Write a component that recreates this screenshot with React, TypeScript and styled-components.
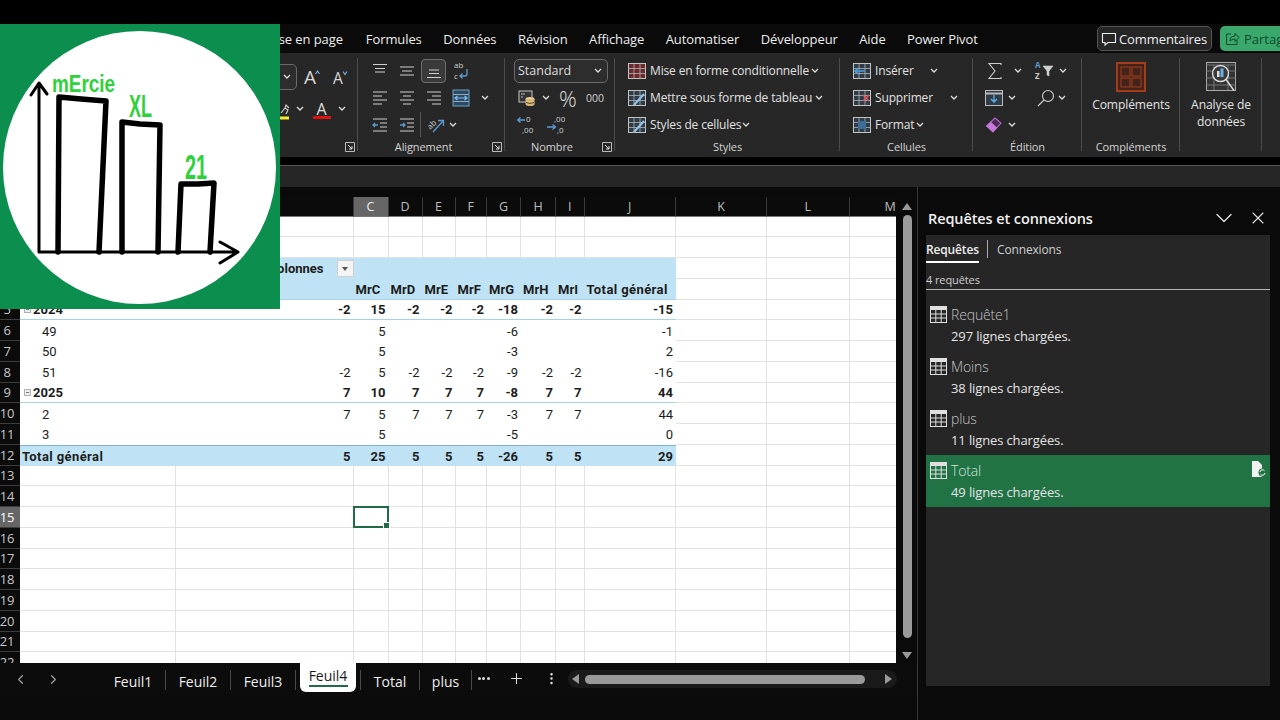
import React from 'react';
import styled, { createGlobalStyle } from 'styled-components';
import { ChevronDown, ChevronLeft, ChevronRight, X, Plus, EllipsisVertical } from 'lucide-react';

const Global = createGlobalStyle`
  html, body { margin: 0; padding: 0; background: #000; overflow: hidden; }
  * { box-sizing: border-box; }
`;
const UI = `"Open Sans", "Noto Sans", sans-serif`;
const CELL = `Roboto, "Liberation Sans", sans-serif`;

const Page = styled.div`
  position: relative; width: 1280px; height: 720px; background: #000; color: #e6e6e6;
  font-family: ${UI}; overflow: hidden; display: flex; flex-direction: column;
`;
const TopBlack = styled.div`height: 24px; flex: none;`;
const MenuBar = styled.div`
  height: 29px; flex: none; background: #0a0a0a; display: flex; align-items: center; padding-left: 264px; position: relative;
`;
const MenuItem = styled.span`font-size: 13px; color: #ededed; margin-right: 21.5px; white-space: nowrap; letter-spacing: -.1px; &:first-child { margin-right: 23px; }`;
const MenuRight = styled.div`margin-left: auto; display: flex; align-items: center; gap: 8px;`;
const CommentBtn = styled.div`
  width: 115px; height: 25px; border: 1px solid #555; border-radius: 5px; background: #262626; display: flex; align-items: center;
  gap: 2px; padding-left: 3px; font-size: 13px; color: #eee; letter-spacing: -.1px; white-space: nowrap;
  svg { flex: none; }
`;
const ShareBtn = styled.div`
  width: 60px; height: 25px; border-radius: 5px 0 0 5px; background: #3aa76d; display: flex; align-items: center; gap: 4px; padding-left: 5px;
  font-size: 13px; color: #0f4a2b; overflow: hidden; white-space: nowrap;
  svg { flex: none; }
`;
const Ribbon = styled.div`height: 104px; flex: none; background: #272727; display: flex; padding-top: 4px;`;
const Group = styled.div<{ $w: number }>`width: ${p => p.$w}px; flex: none; display: flex; flex-direction: column;`;
const Body = styled.div`height: 81px; flex: none;`;
const FontBody = styled(Body)`padding-top: 6px; display: flex; flex-direction: column; gap: 5px;`;
const Foot = styled.div`height: 17px; display: flex; align-items: center;`;
const FootLabel = styled.span`flex: 1; text-align: center; font-size: 11px; color: #d4d4d4; white-space: nowrap; letter-spacing: -.1px;`;
const Launch = styled.span`width: 16px; flex: none; display: flex; justify-content: center;`;
const Sep = styled.div`width: 1px; flex: none; background: #4b4b4b; margin: 1px 0 6px; margin-left: -1px;`;
const IconRow = styled.div<{ $pad?: number }>`height: 27px; display: flex; align-items: center; padding-left: ${p => p.$pad || 0}px;`;
const EndRow = styled.div<{ $pad: number }>`height: 27px; display: flex; align-items: center; justify-content: flex-end; padding-right: ${p => p.$pad}px;`;
const Slot = styled.span<{ $w?: number }>`width: ${p => p.$w || 27}px; height: 27px; flex: none; display: flex; align-items: center; justify-content: center;`;
const Picked = styled.span`width: 25px; height: 24px; border: 1px solid #6e6e6e; background: #3a3a3a; border-radius: 4px; display: flex; align-items: center; justify-content: center; margin: 0 1px;`;
const Divided = styled.span`width: 27px; height: 25px; border-left: 1px solid #555; display: flex; align-items: center; justify-content: center; padding-left: 2px;`;
const SelectBox = styled.div<{ $w: number; $h?: number }>`
  width: ${p => p.$w}px; height: ${p => p.$h || 24}px; border: 1px solid #6a6a6a; border-radius: 5px; background: #2d2d2d; display: flex; align-items: center;
  justify-content: space-between; padding: 0 5px 0 3px; font-size: 12.5px; color: #ddd; flex: none;
`;
const NumSelectRow = styled.div`height: 27px; display: flex; align-items: center; padding-left: 9px;`;
const TextBtn = styled.span`font-size: 12px; color: #e2e2e2; margin-left: 4px; white-space: nowrap; letter-spacing: -.15px;`;
const BigBody = styled.div`height: 81px; display: flex; flex-direction: column; align-items: center; padding-top: 5px; flex: none;`;
const BigText = styled.div`font-size: 12.1px; line-height: 16.5px; color: #e2e2e2; text-align: center; margin-top: 5px; white-space: nowrap; letter-spacing: -.1px;`;
const Thousands = styled.span`font-size: 10.5px; color: #cfcfcf;`;
const Percent = styled.span`font-size: 22px; color: #ddd; font-weight: 300; line-height: 24px;`;

const FormulaGap = styled.div`height: 8px; flex: none;`;
const FormulaBar = styled.div`height: 22px; flex: none; background: #262626; border-top: 1px solid #555;`;
const Main = styled.div`flex: 1; display: flex; min-height: 0; background: #0a0a0a;`;
const SheetCol = styled.div`width: 917px; flex: none; display: flex; flex-direction: column;`;
const SheetTop = styled.div`height: 476px; display: flex; padding-top: 10px;`;
const SheetArea = styled.div`width: 896px; flex: none; overflow: hidden; display: flex; flex-direction: column; background: #fff;`;

const COLS = '20px 156px 177.5px 35px 34px 33px 31.5px 34px 35px 28.5px 91.5px 91px 82.5px 82px';
const Line = styled.div<{ $h?: number }>`
  display: grid; grid-template-columns: ${COLS}; height: ${p => p.$h || 20.75}px; flex: none;
`;
const ColHead = styled.div<{ $on?: boolean }>`
  background: ${p => p.$on ? '#666' : '#0b0b0b'}; color: ${p => p.$on ? '#eee' : '#bdbdbd'}; font-family: ${UI}; font-size: 12.5px;
  display: flex; align-items: center; justify-content: center; border-right: 1px solid #3a3a3a; border-bottom: 1px solid #777;
`;
const RowHead = styled.div<{ $on?: boolean }>`
  background: ${p => p.$on ? '#666' : '#0b0b0b'}; color: ${p => p.$on ? '#fff' : '#c8c8c8'}; font-family: ${UI}; font-size: 13px;
  display: flex; align-items: center; justify-content: center; padding-right: 6px; border-bottom: 1px solid #3d3d3d; letter-spacing: -.2px; overflow: hidden;
`;
const Cell = styled.div<{ $grid?: boolean; $fill?: boolean; $bold?: boolean; $right?: boolean; $rule?: string; $top?: string; $indent?: number }>`
  position: relative; font-family: ${CELL}; font-size: 13px; color: #1c1c1c; display: flex; align-items: center; white-space: nowrap;
  font-weight: ${p => p.$bold ? 700 : 400};
  justify-content: ${p => p.$right ? 'flex-end' : 'flex-start'};
  padding: 1px 3px 0 ${p => p.$indent || 2}px;
  background: ${p => p.$fill ? '#bfe3f5' : '#fff'};
  border-right: ${p => p.$grid ? '1px solid #e2e2e2' : 'none'};
  border-bottom: ${p => p.$rule ? `1px solid ${p.$rule}` : p.$grid ? '1px solid #e2e2e2' : 'none'};
  border-top: ${p => p.$top ? `1px solid ${p.$top}` : 'none'};
`;
const ColLabel = styled(Cell)`justify-content: flex-end; padding-right: 30px;`;
const Wide = styled.span`letter-spacing: .4px;`;
const FilterBtn = styled.span`
  position: absolute; right: 0; top: 2px; width: 17px; height: 17px; background: #f4f4f4; border: 1px solid #cfcfcf; display: flex; align-items: center; justify-content: center;
`;
const Tri = styled.span`width: 0; height: 0; border-left: 3.5px solid transparent; border-right: 3.5px solid transparent; border-top: 4px solid #555;`;
const Collapse = styled.span`
  width: 7px; height: 7px; border: 1px solid #b0b0b0; background: #eee; margin: 0 2px 0 2px; position: relative; flex: none;
  &::after { content: ''; position: absolute; left: 1px; right: 1px; top: 2px; height: 1px; background: #777; }
`;
const Selected = styled.div`
  position: absolute; inset: -1px -1px -1px -1px; border: 2px solid #1f6b45; z-index: 2;
  &::after { content: ''; position: absolute; right: -3px; bottom: -3px; width: 5px; height: 5px; background: #1f6b45; border: 1px solid #fff; }
`;
const VScroll = styled.div`width: 21px; flex: none; display: flex; flex-direction: column; align-items: center; padding: 6px 0 0 1px; position: relative;`;
const VArrow = styled.span<{ $up?: boolean }>`
  width: 0; height: 0; border-left: 5px solid transparent; border-right: 5px solid transparent; flex: none;
  ${p => p.$up ? 'border-bottom: 7px solid #999;' : 'border-top: 7px solid #999;'}
`;
const VThumb = styled.div`width: 9px; height: 423px; background: #9a9a9a; border-radius: 5px; margin: 5px 0 14px; flex: none;`;

const TabsBar = styled.div`height: 33px; flex: none; display: flex; align-items: flex-start; background: #0c0c0c; width: 917px;`;
const NavSlot = styled.span`width: 33px; height: 33px; display: flex; align-items: center; justify-content: center; color: #9c9c9c; flex: none;`;
const NavPad = styled.span`width: 3.5px; flex: none;`;
const NavGap = styled.span`width: 31px; flex: none;`;
const SheetTab = styled.div<{ $w: number }>`
  width: ${p => p.$w}px; height: 33px; flex: none; display: flex; align-items: center; justify-content: center; padding-top: 3px;
  font-size: 14px; color: #eee; position: relative; white-space: nowrap;
  &::after { content: ''; position: absolute; right: 0; top: 7px; height: 20px; width: 1px; background: #4a4a4a; }
`;
const ActiveWrap = styled.div<{ $w: number }>`
  width: ${p => p.$w}px; height: 33px; flex: none; position: relative; display: flex; justify-content: center;
  &::after { content: ''; position: absolute; right: 0; top: 7px; height: 20px; width: 1px; background: #4a4a4a; }
`;
const ActiveTab = styled.div`
  width: 56px; height: 29px; background: #fff; border-radius: 0 0 6px 6px; color: #1b1b1b; font-size: 14px; display: flex; flex-direction: column; align-items: center; padding-top: 3px; line-height: 19px;
  &::after { content: ''; width: 39px; height: 2px; background: #1f6b45; margin-top: 0; }
`;
const BarBtn = styled.span<{ $w: number }>`width: ${p => p.$w}px; height: 33px; flex: none; display: flex; align-items: center; justify-content: center; color: #ddd; padding-bottom: 2px;`;
const Dots = styled.span`display: flex; gap: 1.5px; span { width: 3px; height: 3px; border-radius: 50%; background: #ddd; }`;
const HScroll = styled.div`width: 329px; height: 18px; margin: 7px 0 0 3.5px; border-radius: 9px; background: #1a1a1a; display: flex; align-items: center; padding: 0 5px 0 4px; flex: none;`;
const HThumb = styled.div`width: 280px; height: 9px; border-radius: 5px; background: #9a9a9a; margin-left: 6px;`;
const HArrow = styled.span<{ $left?: boolean }>`
  width: 0; height: 0; border-top: 5px solid transparent; border-bottom: 5px solid transparent;
  ${p => p.$left ? 'border-right: 7px solid #999;' : 'border-left: 7px solid #999; margin-left: auto;'}
`;

const Panel = styled.div`width: 363px; flex: none; border-left: 1px solid #3a3a3a; padding: 0 10px 0 8px; display: flex; flex-direction: column;`;
const PanelHead = styled.div`height: 48px; flex: none; display: flex; align-items: center; padding: 14px 0 0 2px; margin-right: -5px;`;
const PanelTitle = styled.div`font-size: 14.5px; font-weight: 600; color: #f0f0f0; flex: 1; letter-spacing: -.1px; white-space: nowrap;`;
const PanelBtn = styled.span`width: 34px; display: flex; justify-content: center; color: #e6e6e6;`;
const Pane = styled.div`height: 451px; flex: none; background: #262626; display: flex; flex-direction: column;`;
const PaneTabs = styled.div`height: 28px; flex: none; display: flex; align-items: flex-start;`;
const PaneTabOn = styled.div`
  width: 53px; height: 28px; border-bottom: 2px solid #fff; font-size: 12px; font-weight: 600; color: #eee; padding-top: 6px; white-space: nowrap; letter-spacing: -.15px;
`;
const PaneDiv = styled.div`width: 1px; height: 18px; background: #aaa; margin: 5px 9px 0 8px;`;
const PaneTab = styled.div`font-size: 12px; color: #cfcfcf; padding-top: 6px; white-space: nowrap; letter-spacing: -.15px;`;
const Count = styled.div`height: 27px; flex: none; border-bottom: 1px solid #b5b5b5; font-size: 11px; color: #cfcfcf; padding-top: 9px; letter-spacing: -.1px; margin-bottom: 9px;`;
const Query = styled.div<{ $on?: boolean }>`
  height: 52px; flex: none; position: relative; padding: 4px 0 0 4px; background: ${p => p.$on ? '#217346' : 'transparent'};
`;
const QueryTop = styled.div`display: flex; align-items: center; gap: 4px; height: 22px;`;
const QueryName = styled.span<{ $on?: boolean }>`font-size: 14px; font-weight: 300; color: ${p => p.$on ? '#cfe8d8' : '#c4c4c4'}; letter-spacing: -.15px;`;
const QuerySub = styled.div`font-size: 13px; color: #e4e4e4; padding-left: 21px; line-height: 23px; letter-spacing: -.12px;`;
const DocMark = styled.span`position: absolute; right: 3px; top: 6px; display: flex;`;
const LogoFrame = styled.div`position: absolute; left: 0; top: 24px; width: 280px; height: 285px; background: #0b8e4e; z-index: 5;`;

/* ---------- icons ---------- */
const Chev = ({ ml = 0 }: { ml?: number }) => (
  <svg width="8" height="5" viewBox="0 0 8 5" style={{ marginLeft: ml, flex: 'none' }}><path d="M1 1l3 3 3-3" fill="none" stroke="#ddd" strokeWidth="1.3" /></svg>
);
const Launcher = () => (
  <svg width="10" height="10" viewBox="0 0 10 10"><path d="M.5 9.5v-9h9v9z" fill="none" stroke="#bbb" /><path d="M3 3l4 4M7 4v3H4" fill="none" stroke="#ddd" /></svg>
);
const Rows = ({ d }: { d: string }) => (
  <svg width="18" height="18" viewBox="0 0 18 18"><path d={d} fill="none" stroke="#d0d0d0" strokeWidth="1.2" /></svg>
);
const I = {
  top: 'M2 2.5h14M4 6.5h10M4 10h10', mid: 'M2 5h14M4 9h10M2 13h14', bot: 'M4 8h10M4 11.5h10M2 15.5h14',
  left: 'M2 3h14M2 7h9M2 11h14M2 15h9', center: 'M2 3h14M5 7h8M2 11h14M5 15h8', right: 'M2 3h14M7 7h9M2 11h14M7 15h9',
};
const Wrap = () => (
  <svg width="20" height="24" viewBox="0 0 20 24"><text x="3" y="9" fontSize="8" fill="#ccc" fontFamily="Open Sans">ab</text><text x="3" y="19.9" fontSize="8" fill="#ccc" fontFamily="Open Sans">c</text><path d="M16 10v5q0 2-2 2H9m2.500-2.500L9 17l2.500 2.500" fill="none" stroke="#5b9bd5" strokeWidth="1.3" /></svg>
);
const Merge = () => (
  <svg width="18" height="18" viewBox="0 0 18 18"><rect x="1" y="1" width="16" height="16" fill="#2c4a63" stroke="#6f9fc4" /><path d="M1 5.500h16M1 12.500h16" stroke="#8fa9bd" /><path d="M3 9h12M5.500 7L3 9l2.500 2M12.500 7L15 9l-2.500 2" fill="none" stroke="#7fc0f0" strokeWidth="1.2" /></svg>
);
const Indent = ({ flip }: { flip?: boolean }) => (
  <svg width="18" height="16" viewBox="0 0 18 16"><path d="M2 2h14M9 6h7M9 10h7M2 14h14" stroke="#cfcfcf" strokeWidth="1.2" /><path d={flip ? 'M2 8h5M5 6l2 2-2 2' : 'M2 8h5M4 6L2 8l2 2'} fill="none" stroke="#5b9bd5" strokeWidth="1.3" /></svg>
);
const Orient = () => (
  <svg width="22" height="24" viewBox="0 0 22 24"><text x="3" y="15" fontSize="8" fill="#ccc" fontFamily="Open Sans" transform="rotate(-45 7 12)">ab</text><path d="M9 19L19 8M14 7.500H19.500V13" fill="none" stroke="#5b9bd5" strokeWidth="1.3" /></svg>
);
const AUp = ({ up }: { up?: boolean }) => (
  <svg width="22" height="28" viewBox="0 0 22 28"><text x={up ? 3 : 5} y="21" fontSize={up ? 19 : 15.5} fill="#d8d8d8" fontFamily="Open Sans">A</text><path d={up ? 'M14.500 11l2-3 2 3' : 'M15 8.500l2 3 2-3'} fill="none" stroke="#7db4dc" strokeWidth="1.1" /></svg>
);
const Highlight = () => (
  <svg width="18" height="24" viewBox="0 0 18 24"><path d="M6 16l4-5 3 2-2 4M10 11l1-3 3 3" fill="none" stroke="#ccc" strokeWidth="1.2" /><rect x="0" y="19.500" width="14" height="3" fill="#f3e92f" /></svg>
);
const FontA = () => (
  <svg width="18" height="26" viewBox="0 0 18 26"><text x="3.500" y="19" fontSize="16" fill="#dedede" fontFamily="Open Sans">A</text><rect x="0" y="20" width="18" height="3" fill="#e01313" /></svg>
);
const Acct = () => (
  <svg width="18" height="18" viewBox="0 0 18 18"><rect x="1" y="2" width="13" height="11" fill="#333" stroke="#c9c9c9" /><path d="M3 5h4M3 8h2" stroke="#bbb" /><ellipse cx="12" cy="10" rx="4.500" ry="2" fill="#e6cf9a" /><path d="M7.500 10v5q0 2 4.500 2t4.500-2v-5" fill="#d8b878" /><path d="M8 13.500q4 2 8 0" stroke="#5a4a28" fill="none" /></svg>
);
const Dec = ({ more }: { more?: boolean }) => (
  <svg width="20" height="24" viewBox="0 0 20 24">
    <text x={more ? 8 : 9} y="9" fontSize="8" fill="#d0d0d0" fontFamily="Open Sans">{more ? ',00' : '0'}</text>
    <text x={more ? 11 : 5} y="19.900" fontSize="8" fill="#d0d0d0" fontFamily="Open Sans">{more ? ',0' : ',00'}</text>
    <path d={more ? 'M1 14h8M6.500 11.500L9.500 14l-3 2.500' : 'M8 7H1M3.500 4.500L.8 7l2.700 2.500'} fill="none" stroke="#5b9bd5" strokeWidth="1.3" />
  </svg>
);
const Table = ({ tint, mark }: { tint?: string; mark?: 'pen' | 'arrow' | 'x' | 'size' }) => (
  <svg width="18" height="18" viewBox="0 0 18 18">
    <rect x=".5" y="1.500" width="17" height="15" fill={tint || '#2f3c48'} stroke="#c4c4c4" />
    <path d="M.5 6.500h17M.5 11.500h17M6 1.500v15M12 1.500v15" stroke="#b5b5b5" strokeWidth=".8" />
    {mark === 'pen' && <path d="M6 16L16 5" stroke="#8fc3ea" strokeWidth="2.200" />}
    {mark === 'arrow' && <path d="M12 9H2M5 6L2 9l3 3" fill="none" stroke="#4aa3e6" strokeWidth="1.500" />}
    {mark === 'x' && <path d="M10 6l6 6M16 6l-6 6" stroke="#e0555a" strokeWidth="1.600" />}
    {mark === 'size' && <rect x="5" y="5" width="8" height="8" fill="#3d6e96" />}
  </svg>
);
const Sigma = () => (<svg width="18" height="18" viewBox="0 0 18 18"><path d="M15 3V1.500H3l6 7.500-6 7.500h12V15" fill="none" stroke="#cfcfcf" strokeWidth="1.100" /></svg>);
const FillDown = () => (<svg width="18" height="16" viewBox="0 0 18 16"><rect x=".5" y=".5" width="17" height="15" fill="#2f3c48" stroke="#bbb" /><path d="M.5 3.500h17" stroke="#bbb" strokeWidth="2" /><path d="M9 5v7M6 9l3 3 3-3" fill="none" stroke="#5db0ee" strokeWidth="1.300" /></svg>);
const Eraser = () => (<svg width="18" height="18" viewBox="0 0 18 18"><path d="M1.500 10L10 2l6 5-8 9z" fill="#4a2a55" stroke="#b56ac9" strokeWidth="1.100" /><path d="M1.500 10l6.500 6 4-4.500L6 6z" fill="#c67bdc" /></svg>);
const Sort = () => (
  <svg width="20" height="24" viewBox="0 0 20 24"><text x="0" y="9" fontSize="8" fontWeight="700" fill="#5b9bd5" fontFamily="Open Sans">A</text><text x="0" y="19.900" fontSize="8" fontWeight="700" fill="#cfcfcf" fontFamily="Open Sans">Z</text><path d="M8 7h10l-4 5v5l-2-1v-4z" fill="#cfcfcf" stroke="#cfcfcf" strokeWidth=".6" /></svg>
);
const Search = () => (<svg width="18" height="18" viewBox="0 0 18 18"><circle cx="11" cy="7" r="5.500" fill="none" stroke="#d0d0d0" strokeWidth="1.100" /><path d="M7 11l-6 6" stroke="#d0d0d0" strokeWidth="1.100" /></svg>);
const AddIns = () => (
  <svg width="30" height="30" viewBox="0 0 30 30"><rect x="1" y="1" width="28" height="28" fill="#43241a" stroke="#a53c1c" strokeWidth="2" /><rect x="5" y="5" width="9" height="9" fill="none" stroke="#a53c1c" /><rect x="16" y="5" width="9" height="9" fill="none" stroke="#a53c1c" /><rect x="5" y="16" width="9" height="9" fill="none" stroke="#a53c1c" /><rect x="16" y="16" width="9" height="9" fill="none" stroke="#a53c1c" /></svg>
);
const Analyze = () => (
  <svg width="30" height="30" viewBox="0 0 30 30">
    <rect x=".5" y=".5" width="29" height="28" fill="#333" stroke="#aaa" /><path d="M.5 3h29M.5 9h29M.5 16h29M.5 23h29M8 3v25M22 3v25" stroke="#777" />
    <circle cx="14.500" cy="11.500" r="8" fill="#3a3a3a" stroke="#ddd" strokeWidth="1.400" />
    <rect x="11" y="9" width="2.500" height="6" fill="#ddd" /><rect x="14.500" y="6.500" width="3" height="8.500" fill="#62b0ea" />
    <path d="M20 17.500l8 11" stroke="#ddd" strokeWidth="1.400" />
  </svg>
);
const QIcon = () => (
  <svg width="17" height="17" viewBox="0 0 17 17"><rect x=".5" y=".5" width="16" height="16" fill="none" stroke="#e0e0e0" /><rect x=".5" y=".5" width="16" height="3.500" fill="#e0e0e0" /><path d="M.5 8h16M.5 12h16M5.800 4v12.500M11.200 4v12.500" stroke="#e0e0e0" /></svg>
);
const DocIcon = () => (
  <svg width="16" height="16" viewBox="0 0 16 16"><path d="M1 0h6l4 4v12H1z" fill="#f2f2f2" /><circle cx="11.500" cy="11.500" r="4" fill="#217346" /><path d="M9 11a2.500 2.500 0 0 1 4.500-1.200M14 12a2.500 2.500 0 0 1-4.500 1.200" fill="none" stroke="#fff" strokeWidth="1" /></svg>
);
const Bubble = () => (<svg width="16" height="16" viewBox="0 0 16 16"><path d="M1.500 2.500h13v9H7l-3 2.500v-2.500H1.500z" fill="none" stroke="#eee" strokeWidth="1.100" /></svg>);
const ShareIco = () => (<svg width="15" height="15" viewBox="0 0 15 15"><path d="M6 3H1.500v10.500h10.500V9" fill="none" stroke="#0f4a2b" /><path d="M5 10q0-5 5-5V2.500l4 4-4 4V8q-3 0-5 2z" fill="none" stroke="#0f4a2b" /></svg>);

const Logo = () => (
  <LogoFrame>
    <svg width="280" height="285" viewBox="0 0 280 285">
      <circle cx="139.500" cy="143.500" r="136.500" fill="#fff" />
      <g fill="none" stroke="#000" strokeLinecap="round" strokeLinejoin="round">
        <path d="M39 60V228H238M31 71l8-12 8 11M220 218l18 10-18 11" strokeWidth="3" />
        <path d="M58 228L59 73 81 75 106 77 99 228M122 228V98L140 100 160 101 158 228M178 228L181 160 198 160 214 159 210 228" strokeWidth="5.500" />
      </g>
      <g fill="#2fd13a" fontWeight="700" fontFamily="'Liberation Sans Narrow','Liberation Sans',sans-serif">
        <text x="52" y="68" fontSize="24" textLength="63" lengthAdjust="spacingAndGlyphs">mErcie</text>
        <text x="129" y="93" fontSize="32" textLength="23" lengthAdjust="spacingAndGlyphs">XL</text>
        <text x="185" y="155" fontSize="35" textLength="22" lengthAdjust="spacingAndGlyphs">21</text>
      </g>
    </svg>
  </LogoFrame>
);

/* ---------- data ---------- */
const LETTERS = ['A', 'B', 'C', 'D', 'E', 'F', 'G', 'H', 'I', 'J', 'K', 'L', 'M'];
type P = { label: string; vals: (number | '')[]; kind: 'year' | 'week' | 'total' };
const PIVOT: Record<number, P> = {
  5: { label: '2024', kind: 'year', vals: [-2, 15, -2, -2, -2, -18, -2, -2, -15] },
  6: { label: '49', kind: 'week', vals: ['', 5, '', '', '', -6, '', '', -1] },
  7: { label: '50', kind: 'week', vals: ['', 5, '', '', '', -3, '', '', 2] },
  8: { label: '51', kind: 'week', vals: [-2, 5, -2, -2, -2, -9, -2, -2, -16] },
  9: { label: '2025', kind: 'year', vals: [7, 10, 7, 7, 7, -8, 7, 7, 44] },
  10: { label: '2', kind: 'week', vals: [7, 5, 7, 7, 7, -3, 7, 7, 44] },
  11: { label: '3', kind: 'week', vals: ['', 5, '', '', '', -5, '', '', 0] },
  12: { label: 'Total général', kind: 'total', vals: [5, 25, 5, 5, 5, -26, 5, 5, 29] },
};
const HEADS = ['MrB', 'MrC', 'MrD', 'MrE', 'MrF', 'MrG', 'MrH', 'MrI'];
const Free = ({ n }: { n: number }) => (
  <>{Array.from({ length: n }).map((_, i) => <Cell key={i} $grid />)}</>
);

const SheetRow = ({ r }: { r: number }) => {
  const head = <RowHead $on={r === 15}>{r}</RowHead>;
  if (r === 3) return (
    <Line>{head}
      <Cell $fill $bold>Somme de Valeur</Cell>
      <ColLabel $fill $bold>Étiquettes de colonnes<FilterBtn><Tri /></FilterBtn></ColLabel>
      {Array.from({ length: 8 }).map((_, i) => <Cell key={i} $fill />)}
      <Free n={3} />
    </Line>
  );
  if (r === 4) return (
    <Line>{head}
      <Cell $fill $bold $rule="#a5d3ea">Étiquettes de lignes</Cell>
      {HEADS.map(h => <Cell key={h} $fill $bold $rule="#a5d3ea">{h}</Cell>)}
      <Cell $fill $bold $rule="#a5d3ea"><Wide>Total général</Wide></Cell>
      <Free n={3} />
    </Line>
  );
  const p = PIVOT[r];
  if (p) {
    const total = p.kind === 'total';
    const bold = p.kind !== 'week';
    const rule = p.kind === 'year' ? '#a5d3ea' : undefined;
    return (
      <Line>{head}
        <Cell $fill={total} $bold={bold} $rule={rule} $top={total ? '#7fb4d0' : undefined} $indent={p.kind === 'week' ? 22 : 2}>
          {p.kind === 'year' && <Collapse />}{total ? <Wide>{p.label}</Wide> : p.label}
        </Cell>
        {p.vals.map((v, i) => <Cell key={i} $right $fill={total} $bold={bold} $rule={rule} $top={total ? '#7fb4d0' : undefined}>{v}</Cell>)}
        <Free n={3} />
      </Line>
    );
  }
  return (
    <Line>{head}
      {LETTERS.map(l => <Cell key={l} $grid>{r === 15 && l === 'C' && <Selected />}</Cell>)}
    </Line>
  );
};

const Queries = [
  { n: 'Requête1', s: '297 lignes chargées.' },
  { n: 'Moins', s: '38 lignes chargées.' },
  { n: 'plus', s: '11 lignes chargées.' },
  { n: 'Total', s: '49 lignes chargées.', on: true },
];
const Menu = ['Mise en page', 'Formules', 'Données', 'Révision', 'Affichage', 'Automatiser', 'Développeur', 'Aide', 'Power Pivot'];

export default function App() {
  return (
    <Page>
      <Global />
      <TopBlack />
      <MenuBar>
        {Menu.map(m => <MenuItem key={m}>{m}</MenuItem>)}
        <MenuRight>
          <CommentBtn><Bubble />Commentaires</CommentBtn>
          <ShareBtn><ShareIco />Partager</ShareBtn>
        </MenuRight>
      </MenuBar>
      <Ribbon>
        <Group $w={358}>
          <FontBody>
            <EndRow $pad={6}>
              <SelectBox $w={80} $h={26}><span /><Chev /></SelectBox>
              <Slot $w={1} />
              <Slot><AUp up /></Slot><Slot><AUp /></Slot>
            </EndRow>
            <EndRow $pad={10}>
              <Slot $w={18}><Highlight /></Slot><Slot $w={14}><Chev /></Slot>
              <Slot $w={29}><FontA /></Slot><Slot $w={12}><Chev /></Slot>
            </EndRow>
          </FontBody>
          <Foot><FootLabel>Police</FootLabel><Launch><Launcher /></Launch></Foot>
        </Group>
        <Sep />
        <Group $w={147}>
          <Body>
            <IconRow $pad={8}>
              <Slot><Rows d={I.top} /></Slot><Slot><Rows d={I.mid} /></Slot>
              <Slot><Picked><Rows d={I.bot} /></Picked></Slot><Slot><Wrap /></Slot>
            </IconRow>
            <IconRow $pad={8}>
              <Slot><Rows d={I.left} /></Slot><Slot><Rows d={I.center} /></Slot><Slot><Rows d={I.right} /></Slot><Slot><Merge /></Slot><Slot $w={22}><Chev /></Slot>
            </IconRow>
            <IconRow $pad={8}>
              <Slot><Indent /></Slot><Slot><Indent flip /></Slot>
              <Slot><Divided><Orient /></Divided></Slot><Chev ml={2} />
            </IconRow>
          </Body>
          <Foot><FootLabel>Alignement</FootLabel><Launch><Launcher /></Launch></Foot>
        </Group>
        <Sep />
        <Group $w={110}>
          <Body>
            <NumSelectRow><SelectBox $w={94}>Standard<Chev /></SelectBox></NumSelectRow>
            <IconRow $pad={10}>
              <Slot $w={24}><Acct /></Slot><Slot $w={14}><Chev /></Slot><Slot $w={30}><Percent>%</Percent></Slot><Slot $w={24}><Thousands>000</Thousands></Slot>
            </IconRow>
            <IconRow $pad={10}>
              <Slot $w={24}><Dec /></Slot><Slot $w={34}><Dec more /></Slot>
            </IconRow>
          </Body>
          <Foot><FootLabel>Nombre</FootLabel><Launch><Launcher /></Launch></Foot>
        </Group>
        <Sep />
        <Group $w={225}>
          <Body>
            <IconRow $pad={13}><Table tint="#6a2a2e" /><TextBtn>Mise en forme conditionnelle</TextBtn><Chev ml={2} /></IconRow>
            <IconRow $pad={13}><Table mark="pen" /><TextBtn>Mettre sous forme de tableau</TextBtn><Chev ml={3} /></IconRow>
            <IconRow $pad={13}><Table mark="pen" /><TextBtn>Styles de cellules</TextBtn><Chev ml={1} /></IconRow>
          </Body>
          <Foot><FootLabel>Styles</FootLabel></Foot>
        </Group>
        <Sep />
        <Group $w={133}>
          <Body>
            <IconRow $pad={13}><Table mark="arrow" /><TextBtn>Insérer</TextBtn><Chev ml={16} /></IconRow>
            <IconRow $pad={13}><Table mark="x" /><TextBtn>Supprimer</TextBtn><Chev ml={17} /></IconRow>
            <IconRow $pad={13}><Table mark="size" /><TextBtn>Format</TextBtn><Chev ml={2} /></IconRow>
          </Body>
          <Foot><FootLabel>Cellules</FootLabel></Foot>
        </Group>
        <Sep />
        <Group $w={109}>
          <Body>
            <IconRow $pad={13}><Sigma /><Chev ml={10} /><Slot $w={13} /><Sort /><Chev ml={4} /></IconRow>
            <IconRow $pad={12}><FillDown /><Chev ml={5} /><Slot $w={21} /><Search /><Chev ml={3} /></IconRow>
            <IconRow $pad={12}><Eraser /><Chev ml={5} /></IconRow>
          </Body>
          <Foot><FootLabel>Édition</FootLabel></Foot>
        </Group>
        <Sep />
        <Group $w={98}>
          <BigBody><AddIns /><BigText>Compléments</BigText></BigBody>
          <Foot><FootLabel>Compléments</FootLabel></Foot>
        </Group>
        <Sep />
        <Group $w={82}>
          <BigBody><Analyze /><BigText>Analyse de<br />données</BigText></BigBody>
        </Group>
        <Sep />
      </Ribbon>
      <FormulaGap />
      <FormulaBar />
      <Main>
        <SheetCol>
          <SheetTop>
            <SheetArea>
              <Line $h={19.5}>
                <ColHead />
                {LETTERS.map(l => <ColHead key={l} $on={l === 'C'}>{l}</ColHead>)}
              </Line>
              {Array.from({ length: 22 }).map((_, i) => <SheetRow key={i} r={i + 1} />)}
            </SheetArea>
            <VScroll>
              <VArrow $up /><VThumb /><VArrow />
            </VScroll>
          </SheetTop>
          <TabsBar>
            <NavPad /><NavSlot><ChevronLeft size={15} /></NavSlot><NavSlot><ChevronRight size={15} /></NavSlot><NavGap />
            <SheetTab $w={65}>Feuil1</SheetTab>
            <SheetTab $w={65}>Feuil2</SheetTab>
            <SheetTab $w={65}>Feuil3</SheetTab>
            <ActiveWrap $w={65}><ActiveTab>Feuil4</ActiveTab></ActiveWrap>
            <SheetTab $w={59}>Total</SheetTab>
            <SheetTab $w={52}>plus</SheetTab>
            <BarBtn $w={24}><Dots><span /><span /><span /></Dots></BarBtn>
            <BarBtn $w={42}><Plus size={17} strokeWidth={1.5} /></BarBtn>
            <BarBtn $w={27}><EllipsisVertical size={15} /></BarBtn>
            <HScroll><HArrow $left /><HThumb /><HArrow /></HScroll>
          </TabsBar>
        </SheetCol>
        <Panel>
          <PanelHead>
            <PanelTitle>Requêtes et connexions</PanelTitle>
            <PanelBtn><ChevronDown size={28} strokeWidth={1.1} /></PanelBtn>
            <PanelBtn><X size={20} strokeWidth={1.3} /></PanelBtn>
          </PanelHead>
          <Pane>
            <PaneTabs>
              <PaneTabOn>Requêtes</PaneTabOn><PaneDiv /><PaneTab>Connexions</PaneTab>
            </PaneTabs>
            <Count>4 requêtes</Count>
            {Queries.map(q => (
              <Query key={q.n} $on={q.on}>
                <QueryTop><QIcon /><QueryName $on={q.on}>{q.n}</QueryName></QueryTop>
                <QuerySub>{q.s}</QuerySub>
                {q.on && <DocMark><DocIcon /></DocMark>}
              </Query>
            ))}
          </Pane>
        </Panel>
      </Main>
      <Logo />
    </Page>
  );
}
